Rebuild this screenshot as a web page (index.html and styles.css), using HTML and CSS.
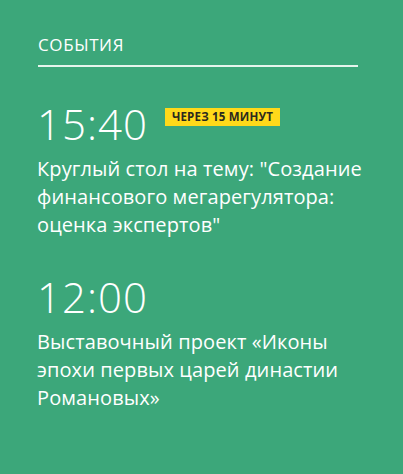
FILE: index.html
```html
<!DOCTYPE html>
<html lang="ru">
<head>
<meta charset="utf-8">
<link rel="stylesheet" href="styles.css">
</head>
<body>
<section class="events">
  <h2 class="events-title">СОБЫТИЯ</h2>
  <div class="event">
    <div class="event-head">
      <span class="event-time">15:40</span>
      <span class="badge">ЧЕРЕЗ 15 МИНУТ</span>
    </div>
    <p class="event-text">Круглый стол на тему: "Создание финансового мегарегулятора: оценка экспертов"</p>
  </div>
  <div class="event">
    <div class="event-head">
      <span class="event-time">12:00</span>
    </div>
    <p class="event-text">Выставочный проект «Иконы эпохи первых царей династии Романовых»</p>
  </div>
</section>
</body>
</html>
```
FILE: styles.css
```css
html, body {
  margin: 0;
  padding: 0;
}
body {
  width: 403px;
  height: 474px;
  background: #3ca77a;
  font-family: "Open Sans", "Noto Sans", sans-serif;
  color: #ffffff;
}
.events {
  padding: 35px 0 0 37px;
  width: 334px;
}
.events-title {
  margin: 0 13px 0 1px;
  font-size: 17px;
  font-weight: 400;
  line-height: 20px;
  padding: 0 0 10px 0;
  border-bottom: 2px solid #e6f4ec;
  letter-spacing: 0.6px;
}
.event {
  margin-top: 32px;
}
.event + .event {
  margin-top: 33px;
}
.event-head {
  display: flex;
  align-items: flex-start;
  gap: 17px;
}
.event-time {
  font-size: 42px;
  font-weight: 300;
  line-height: 50px;
  letter-spacing: 1px;
}
.badge {
  margin-top: 9px;
  background: #ffd91a;
  color: #2a2a1e;
  font-size: 11.5px;
  font-weight: 700;
  line-height: 18px;
  padding: 0 7px;
  letter-spacing: 0.2px;
}
.event-text {
  margin: 6px 0 0;
  font-size: 20px;
  line-height: 28px;
  font-weight: 400;
  letter-spacing: 0.1px;
}
```
